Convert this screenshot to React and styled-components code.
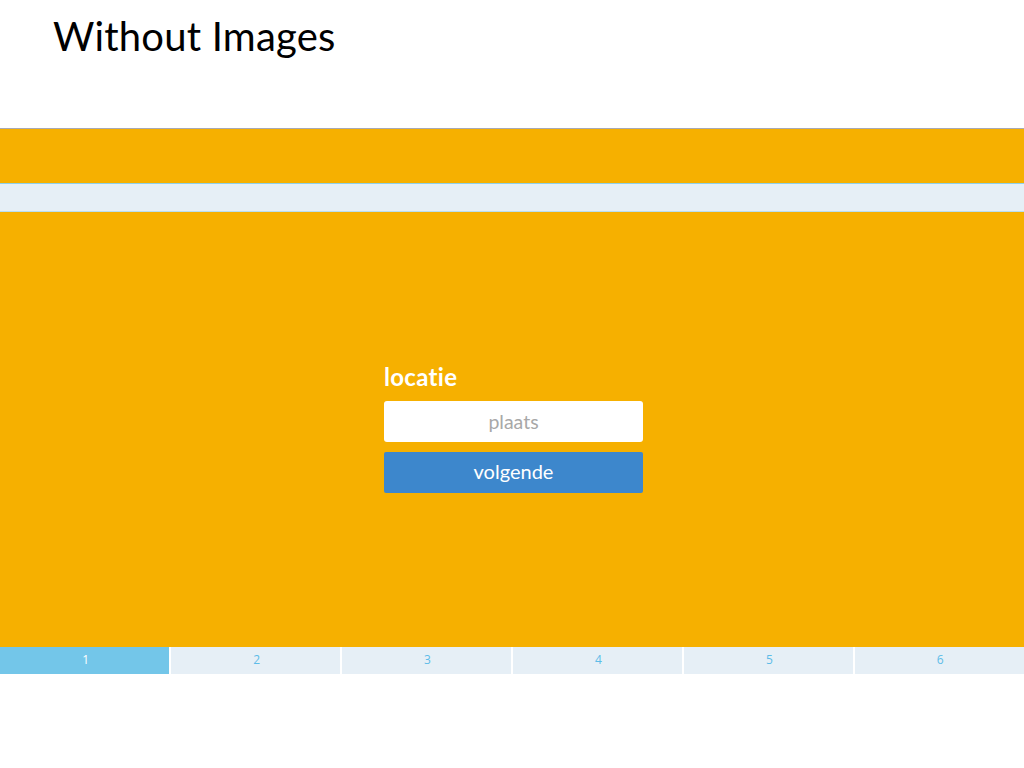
import React from 'react';
import styled, { createGlobalStyle } from 'styled-components';

const GlobalStyle = createGlobalStyle`
    html, body {
        margin: 0;
        padding: 0;
        background: #ffffff;
    }
    body {
        font-family: "Lato", "Open Sans", sans-serif;
        font-variant-ligatures: none;
    }
`;

const Pagina = styled.div`
    width: 1024px;
    height: 768px;
    display: flex;
    flex-direction: column;
    background: #ffffff;
`;

const Cabecera = styled.div`
    height: 128px;
    box-sizing: border-box;
    padding: 12px 0 0 53px;
`;

const Titulo = styled.h1`
    margin: 0;
    font-family: "Lato", sans-serif;
    font-weight: 400;
    font-size: 40px;
    line-height: 48px;
    color: #000000;
    letter-spacing: 0.2px;
`;

const Marco = styled.div`
    display: flex;
    flex-direction: column;
    border-top: 1px solid #a9a9b2;
`;

const BarraSuperior = styled.div`
    height: 54px;
    background: #f6b000;
    border-bottom: 1px solid #8fd0ea;
`;

const SubBarra = styled.div`
    height: 27px;
    background: #e6eff6;
    border-bottom: 1px solid #b9dff0;
`;

const Contenido = styled.div`
    height: 435px;
    background: #f6b000;
    display: flex;
    justify-content: center;
    align-items: center;
`;

const Formulario = styled.form`
    width: 259px;
    display: flex;
    flex-direction: column;
    margin: 0 0 1px 3px;
`;

const Etiqueta = styled.label`
    font-family: "Lato", sans-serif;
    font-weight: 700;
    font-size: 24px;
    line-height: 24px;
    color: #ffffff;
    margin-bottom: 12px;
    font-variant-ligatures: none;
    letter-spacing: 0.3px;
`;

const Campo = styled.input`
    box-sizing: border-box;
    height: 41px;
    width: 100%;
    border: none;
    border-radius: 3px;
    background: #ffffff;
    text-align: center;
    font-family: "Lato", sans-serif;
    font-size: 19.5px;
    color: #333;
    outline: none;
    &::placeholder {
        color: #a8a8a8;
    }
`;

const Boton = styled.button`
    box-sizing: border-box;
    height: 41px;
    width: 100%;
    margin-top: 10px;
    padding: 0 0 3px;
    border: none;
    border-radius: 2px;
    background: #3d87cc;
    color: #ffffff;
    font-family: "Lato", sans-serif;
    font-size: 20px;
    cursor: pointer;
`;

const Pestanas = styled.div`
    display: grid;
    grid-template-columns: repeat(6, 1fr);
    gap: 1.5px;
    height: 27px;
    background: #ffffff;
`;

const Pestana = styled.div`
    display: flex;
    align-items: center;
    justify-content: center;
    padding: 0 0 3px 2px;
    background: ${(p) => (p.$activa ? '#73c6e9' : '#e6eff6')};
    color: ${(p) => (p.$activa ? '#ffffff' : '#5dbce8')};
    font-family: "Open Sans", sans-serif;
    font-size: 12px;
`;

const pasos = [1, 2, 3, 4, 5, 6];

export default function App() {
    return (
        <>
            <GlobalStyle />
            <Pagina>
                <Cabecera>
                    <Titulo>Without Images</Titulo>
                </Cabecera>
                <Marco>
                    <BarraSuperior />
                    <SubBarra />
                    <Contenido>
                        <Formulario onSubmit={(e) => e.preventDefault()}>
                            <Etiqueta htmlFor="plaats">locatie</Etiqueta>
                            <Campo id="plaats" type="text" placeholder="plaats" />
                            <Boton type="submit">volgende</Boton>
                        </Formulario>
                    </Contenido>
                    <Pestanas>
                        {pasos.map((n) => (
                            <Pestana key={n} $activa={n === 1}>{n}</Pestana>
                        ))}
                    </Pestanas>
                </Marco>
            </Pagina>
        </>
    );
}
